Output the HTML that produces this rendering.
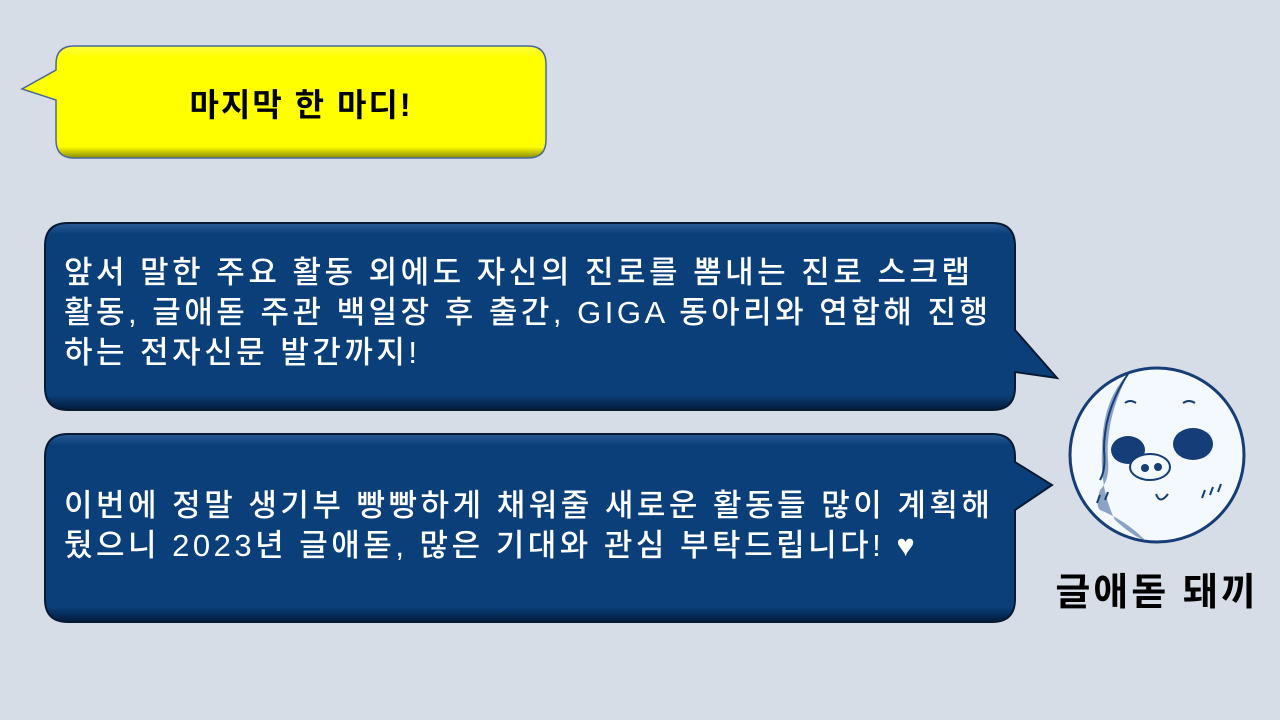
<!DOCTYPE html>
<html><head><meta charset="utf-8"><style>
html,body{margin:0;padding:0;}
body{width:1280px;height:720px;background:#d6dde6;position:relative;overflow:hidden;font-family:"Liberation Sans","Noto Sans CJK KR","NanumGothic",sans-serif;}
svg{position:absolute;left:0;top:0;}
.t{position:absolute;color:#fff;font-size:31px;line-height:40px;white-space:nowrap;font-weight:500;letter-spacing:3.5px;}
</style></head><body>
<svg width="1280" height="720" viewBox="0 0 1280 720">
<defs>
<linearGradient id="yb" x1="0" y1="0" x2="0" y2="1"><stop offset="0" stop-color="#ffff40"/><stop offset=".1" stop-color="#ffff00"/><stop offset=".9" stop-color="#ffff00"/><stop offset="1" stop-color="#8a8a00"/></linearGradient>
<linearGradient id="bb" x1="0" y1="0" x2="0" y2="1"><stop offset="0" stop-color="#2a5a95"/><stop offset=".06" stop-color="#0a3f7a"/><stop offset=".92" stop-color="#0a3f7a"/><stop offset="1" stop-color="#031a3a"/></linearGradient>
</defs>
<path d="M74 46 H528 Q546 46 546 64 V140 Q546 158 528 158 H74 Q56 158 56 140 V100 L22 89 L56 70 V64 Q56 46 74 46 Z" fill="url(#yb)" stroke="#4a6a9a" stroke-width="1.5"/>
<path d="M68 223 H992 Q1015 223 1015 246 V330 L1057 378 L1015 372 V387 Q1015 410 992 410 H68 Q45 410 45 387 V246 Q45 223 68 223 Z" fill="url(#bb)" stroke="#061a33" stroke-width="2"/>
<path d="M68 434 H992 Q1015 434 1015 457 V462 L1052 485 L1015 510 V599 Q1015 622 992 622 H68 Q45 622 45 599 V457 Q45 434 68 434 Z" fill="url(#bb)" stroke="#061a33" stroke-width="2"/>
<g>
<circle cx="1157" cy="455" r="87" fill="#f4f8ff" stroke="#153e78" stroke-width="3"/>
<path d="M1128 374 Q1102 400 1102 450 Q1100 490 1115 520 Q1135 538 1145 540 Q1125 520 1100 510 Q1095 505 1100 490 Q1110 480 1108 460 Q1105 420 1128 374 Z" fill="#8aa3c4"/>
<path d="M1128 374 Q1104 410 1104 450 Q1106 470 1100 480" fill="none" stroke="#153e78" stroke-width="2"/>
<ellipse cx="1128" cy="450" rx="17" ry="14" fill="#153e78"/>
<ellipse cx="1193" cy="444" rx="20" ry="16" fill="#153e78"/>
<ellipse cx="1150" cy="467" rx="20" ry="13" fill="#f4f8ff" stroke="#153e78" stroke-width="2"/>
<circle cx="1145" cy="468" r="4" fill="#153e78"/><circle cx="1158" cy="467" r="4" fill="#153e78"/>
<path d="M1125 403 Q1130 399 1136 403 M1183 403 Q1189 399 1195 403 M1156 494 Q1160 505 1168 494" fill="none" stroke="#153e78" stroke-width="2"/>
<path d="M1205 490 l-3 8 M1213 487 l-3 8 M1221 484 l-3 8 M1100 495 l-3 8 M1108 492 l-3 8" stroke="#153e78" stroke-width="2"/>
</g>
</svg>
<div style="position:absolute;left:56px;top:80px;width:490px;text-align:center;font-size:32px;letter-spacing:2px;font-weight:bold;color:#000;">마지막 한 마디!</div>
<div class="t" style="left:64px;top:253px;">앞서 말한 주요 활동 외에도 자신의 진로를 뽐내는 진로 스크랩<br>활동, 글애돋 주관 백일장 후 출간, GIGA 동아리와 연합해 진행<br>하는 전자신문 발간까지!</div>
<div class="t" style="left:64px;top:486px;">이번에 정말 생기부 빵빵하게 채워줄 새로운 활동들 많이 계획해<br>뒀으니 2023년 글애돋, 많은 기대와 관심 부탁드립니다! ♥</div>
<div style="position:absolute;left:1040px;top:561px;width:234px;text-align:center;font-size:38px;letter-spacing:3px;font-weight:bold;color:#000;">글애돋 돼끼</div>
</body></html>
